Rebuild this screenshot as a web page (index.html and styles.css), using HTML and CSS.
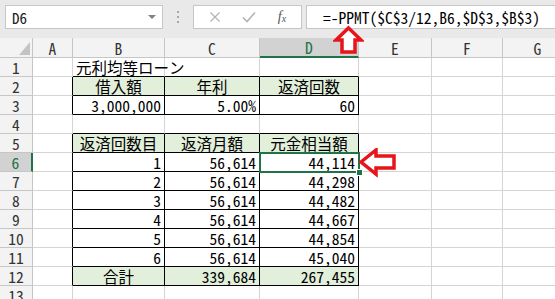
FILE: index.html
```html
<!DOCTYPE html>
<html lang="ja">
  <head>
    <meta charset="UTF-8" />
    <meta name="viewport" content="width=device-width, initial-scale=1.0" />
    <title>元利均等ローン</title>
    <link rel="stylesheet" href="styles.css">
  </head>
  <body>
    <div class="formula-bar">
      <div class="name-box">
        <span>D6</span>
        <span class="caret"></span>
      </div>
      <div class="grip"><i></i><i></i><i></i></div>
      <div class="fx-box">
        <svg class="tool-icon" width="12" height="12" viewBox="0 0 12 12">
          <path d="M1.5 1.5 L10.5 10.5 M10.5 1.5 L1.5 10.5" stroke="#b4b4b4" stroke-width="1.3" fill="none" />
        </svg>
        <svg class="tool-icon" width="14" height="12" viewBox="0 0 14 12">
          <path d="M1 6.5 L5 10.5 L13 1.5" stroke="#b4b4b4" stroke-width="1.6" fill="none" />
        </svg>
        <span class="fx">f<sub>x</sub></span>
      </div>
      <div class="formula">=-PPMT($C$3/12,B6,$D$3,$B$3)</div>
    </div>

    <div class="sheet-wrap">
      <table class="sheet">
        <colgroup>
          <col class="w-head">
          <col class="w-a">
          <col class="w-b">
          <col class="w-c">
          <col class="w-d">
          <col class="w-e">
          <col class="w-f">
          <col class="w-g">
        </colgroup>
        <tr class="col-heads">
          <th class="corner"><span class="corner-mark"></span></th>
          <th>A</th><th>B</th><th>C</th><th class="sel">D</th><th>E</th><th>F</th><th>G</th>
        </tr>
        <tr>
          <th>1</th><td></td><td class="title bb">元利均等ローン</td><td class="bb"></td><td class="bb"></td><td></td><td></td><td></td>
        </tr>
        <tr>
          <th>2</th><td class="br"></td><td class="box hd">借入額</td><td class="box hd">年利</td><td class="box hd">返済回数</td><td></td><td></td><td></td>
        </tr>
        <tr>
          <th>3</th><td class="br"></td><td class="box num">3,000,000</td><td class="box num">5.00%</td><td class="box num">60</td><td></td><td></td><td></td>
        </tr>
        <tr>
          <th>4</th><td></td><td class="bb"></td><td class="bb"></td><td class="bb"></td><td></td><td></td><td></td>
        </tr>
        <tr>
          <th>5</th><td class="br"></td><td class="box hd">返済回数目</td><td class="box hd">返済月額</td><td class="box hd">元金相当額</td><td></td><td></td><td></td>
        </tr>
        <tr>
          <th class="sel">6</th><td class="br"></td><td class="box num">1</td><td class="box num">56,614</td><td class="box num active">44,114</td><td></td><td></td><td></td>
        </tr>
        <tr>
          <th>7</th><td class="br"></td><td class="box num">2</td><td class="box num">56,614</td><td class="box num">44,298</td><td></td><td></td><td></td>
        </tr>
        <tr>
          <th>8</th><td class="br"></td><td class="box num">3</td><td class="box num">56,614</td><td class="box num">44,482</td><td></td><td></td><td></td>
        </tr>
        <tr>
          <th>9</th><td class="br"></td><td class="box num">4</td><td class="box num">56,614</td><td class="box num">44,667</td><td></td><td></td><td></td>
        </tr>
        <tr>
          <th>10</th><td class="br"></td><td class="box num">5</td><td class="box num">56,614</td><td class="box num">44,854</td><td></td><td></td><td></td>
        </tr>
        <tr>
          <th>11</th><td class="br"></td><td class="box num">6</td><td class="box num">56,614</td><td class="box num">45,040</td><td></td><td></td><td></td>
        </tr>
        <tr>
          <th>12</th><td class="br"></td><td class="box hd">合計</td><td class="box hd num">339,684</td><td class="box hd num">267,455</td><td></td><td></td><td></td>
        </tr>
        <tr>
          <th>13</th><td></td><td></td><td></td><td></td><td></td><td></td><td></td>
        </tr>
      </table>

      <!-- red callout arrows -->
      <svg class="arrow arrow-up" width="31" height="30" viewBox="0 0 31 30">
        <polygon points="15.5,3 28,15 22,15 22,27 9,27 9,15 3,15" fill="#fff" stroke="#e8141c" stroke-width="3.5" stroke-linejoin="miter" />
      </svg>
      <svg class="arrow arrow-left" width="40" height="30" viewBox="0 0 40 30">
        <polygon points="3,14 18,2 18,8 36,8 36,20 18,20 18,26" fill="#fff" stroke="#e8141c" stroke-width="3.5" stroke-linejoin="miter" />
      </svg>
    </div>
  </body>
</html>
```

FILE: styles.css
```css
body {
  margin: 0;
  overflow: hidden;
  background: #fff;
  font-family: "Noto Sans Mono CJK JP", "Noto Sans CJK JP", monospace;
  color: #000;
}

/* formula bar */
.formula-bar {
  display: flex;
  align-items: flex-start;
  height: 38px;
  padding: 5px 0 0 5px;
  box-sizing: border-box;
  background: #e9e9e9;
}
.name-box {
  width: 158px;
  height: 24px;
  box-sizing: border-box;
  border: 1px solid #c6c6c6;
  background: #fff;
  display: flex;
  align-items: center;
  justify-content: space-between;
  padding: 0 6px 0 6px;
  font-size: 15px;
  color: #222;
}
.caret {
  width: 0;
  height: 0;
  border-left: 4px solid transparent;
  border-right: 4px solid transparent;
  border-top: 4px solid #808080;
}
.grip {
  width: 30px;
  height: 24px;
  display: flex;
  flex-direction: column;
  align-items: center;
  justify-content: center;
  gap: 3px;
}
.grip i {
  width: 2px;
  height: 2px;
  background: #a8a8a8;
}
.fx-box {
  width: 109px;
  height: 24px;
  box-sizing: border-box;
  border: 1px solid #c6c6c6;
  background: #fff;
  display: flex;
  align-items: center;
  justify-content: space-around;
  padding: 0 4px;
}
.fx {
  font-family: "Liberation Serif", serif;
  font-style: italic;
  font-size: 14px;
  color: #555;
}
.fx sub {
  font-size: 10px;
  vertical-align: -1px;
}
.formula {
  flex: 1;
  height: 24px;
  margin-left: 4px;
  box-sizing: border-box;
  border: 1px solid #c6c6c6;
  border-right: none;
  background: #fff;
  padding-left: 16px;
  font-size: 15.5px;
  line-height: 22px;
  white-space: nowrap;
}

/* sheet grid */
.sheet-wrap {
  position: relative;
}
.sheet {
  border-collapse: separate;
  border-spacing: 0;
  table-layout: fixed;
  width: 573px;
}
.w-head { width: 33px; }
.w-a { width: 40px; }
.w-b { width: 92px; }
.w-c { width: 95px; }
.w-d { width: 99px; }
.w-e { width: 73px; }
.w-f { width: 71px; }
.w-g { width: 70px; }

.sheet th,
.sheet td {
  box-sizing: border-box;
  height: 19px;
  padding: 0 3px;
  border-right: 1px solid #d4d4d4;
  border-bottom: 1px solid #d4d4d4;
  font-size: 15.5px;
  line-height: 18px;
  font-weight: normal;
  vertical-align: bottom;
  white-space: nowrap;
}
.sheet th {
  background: #f3f3f3;
  color: #333;
  text-align: center;
  border-right-color: #c6c6c6;
  border-bottom-color: #c6c6c6;
}
.col-heads th {
  height: 20px;
}
.col-heads th.sel {
  background: #d2d2d2;
  color: #217346;
  border-bottom: 2px solid #217346;
}
.sheet tr > th.sel {
  background: #d2d2d2;
  color: #217346;
}
.sheet tr:not(.col-heads) > th.sel {
  border-right: 2px solid #217346;
}
.corner {
  position: relative;
}
.corner-mark {
  position: absolute;
  right: 2px;
  bottom: 2px;
  width: 0;
  height: 0;
  border-left: 11px solid transparent;
  border-bottom: 13px solid #c3c3c3;
}

.title {
  overflow: visible;
}
.sheet td.box {
  border-right-color: #000;
  border-bottom-color: #000;
}
.sheet td.bb {
  border-bottom-color: #000;
}
.sheet td.br {
  border-right-color: #000;
}
.hd {
  background: #e2efda;
  text-align: center;
}
.num {
  text-align: right;
}

/* active cell */
.sheet td.active {
  position: relative;
}
.sheet td.active::after {
  content: "";
  position: absolute;
  top: -1px;
  left: -1px;
  right: -2px;
  bottom: -2px;
  border: 2px solid #217346;
}
.sheet td.active::before {
  content: "";
  position: absolute;
  right: -5px;
  bottom: -5px;
  width: 5px;
  height: 5px;
  background: #217346;
  border: 1px solid #fff;
  z-index: 1;
}

/* callout arrows */
.arrow {
  position: absolute;
}
.arrow-up {
  left: 333px;
  top: -13px;
}
.arrow-left {
  left: 358px;
  top: 110px;
}
```
